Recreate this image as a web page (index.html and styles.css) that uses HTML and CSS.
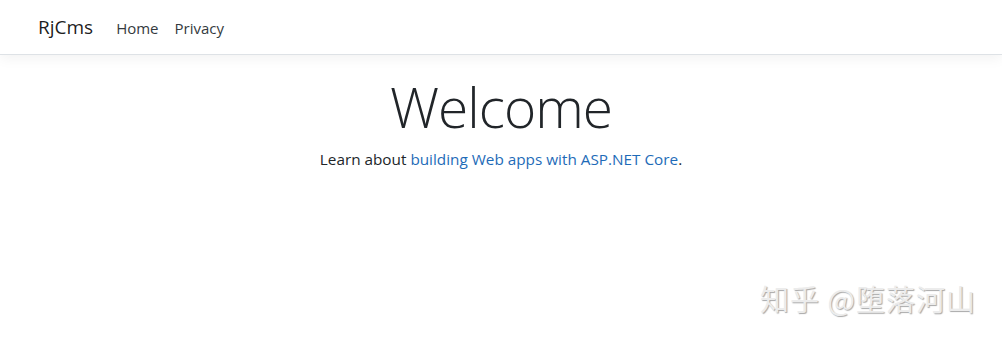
FILE: index.html
```html
<!DOCTYPE html>
<html lang="en">
<head>
  <meta charset="UTF-8">
  <meta name="viewport" content="width=device-width, initial-scale=1.0">
  <title>Home Page - RjCms</title>
  <link rel="stylesheet" href="styles.css">
</head>
<body>

  <header class="navbar">
    <div class="container nav-inner">
      <a class="brand" href="#">RjCms</a>
      <ul class="nav-links">
        <li><a href="#">Home</a></li>
        <li><a href="#">Privacy</a></li>
      </ul>
    </div>
  </header>

  <main class="container">
    <div class="welcome">
      <h1>Welcome</h1>
      <p>Learn about <a href="#">building Web apps with ASP.NET Core</a>.</p>
    </div>
  </main>

  <div class="watermark">知乎 @堕落河山</div>

</body>
</html>
```

FILE: styles.css
```css
body {
  margin: 0;
  font-family: 'Open Sans', 'Noto Sans', sans-serif;
  font-size: 16px;
  line-height: 1.5;
  color: #212529;
  background: #fff;
}

a {
  text-decoration: none;
}

.container {
  max-width: 960px;
  margin: 0 auto;
  padding: 0 15px;
  box-sizing: border-box;
}

.navbar {
  height: 54px;
  border-bottom: 1px solid #dee2e6;
  box-shadow: 0 4px 12px rgba(0, 0, 0, 0.05);
  margin-bottom: 19px;
}

.nav-inner {
  display: flex;
  align-items: center;
  height: 100%;
}

.brand {
  font-size: 19px;
  color: rgba(0, 0, 0, 0.9);
  margin-left: 2px;
  margin-right: 16px;
}

.nav-links {
  display: flex;
  list-style: none;
  margin: 0;
  padding: 2px 0 0;
}

.nav-links a {
  display: block;
  padding: 0 9px 0 7px;
  font-size: 15px;
  color: #343a40;
}

.welcome {
  text-align: center;
}

.welcome h1 {
  margin: 0 0 8px;
  font-size: 55px;
  font-weight: 300;
  line-height: 1.2;
  letter-spacing: -1px;
}

.welcome p {
  margin: 0;
  font-size: 15.3px;
}

.welcome p a {
  color: #1e6bb8;
}

.watermark {
  position: absolute;
  left: 760px;
  top: 277px;
  font-family: 'Noto Sans CJK SC', sans-serif;
  font-size: 29px;
  letter-spacing: 1px;
  color: #ececec;
  text-shadow: 1px 1px 1px #a8a8a8;
}
```
